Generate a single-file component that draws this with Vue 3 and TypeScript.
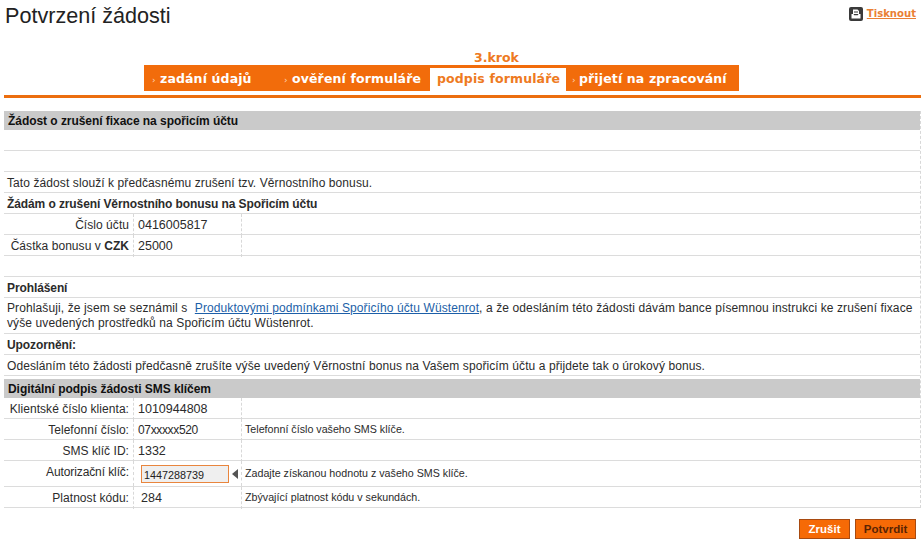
<template>
  <div class="page">
    <header class="page-head">
      <h1 class="page-title">Potvrzení žádosti</h1>
      <a class="print-link">
        <svg class="print-icon" width="14" height="14" viewBox="0 0 14 14">
          <rect width="14" height="14" rx="2" fill="#3a3a3a" />
          <path d="M4 2.500h4.500l1.500 1.500v3H4z" fill="#fff" />
          <path d="M2.500 7h2l.7 1.200h3.600L9.500 7h2v4.500h-9z" fill="#fff" />
          <path d="M5 5h4" stroke="#3a3a3a" stroke-width="1" />
        </svg>
        <span>Tisknout</span>
      </a>
    </header>

    <div class="step-label">3.krok</div>
    <nav class="steps">
      <div
        v-for="step in steps"
        :key="step.label"
        class="step"
        :class="[step.cls, { active: step.active }]"
      >
        <span v-if="!step.active" class="step-arrow">›</span>{{ step.label }}
      </div>
    </nav>
    <div class="rule"></div>

    <section class="form">
      <h2 class="section-head">Žádost o zrušení fixace na spořicím účtu</h2>
      <div class="row full"></div>
      <div class="row full"></div>
      <div class="row full">Tato žádost slouží k předčasnému zrušení tzv. Věrnostního bonusu.</div>
      <div class="row full bold">Žádám o zrušení Věrnostního bonusu na Spořicím účtu</div>
      <div class="row cols">
        <div class="cell label">Číslo účtu</div>
        <div class="cell value">0416005817</div>
        <div class="cell note"></div>
      </div>
      <div class="row cols">
        <div class="cell label">Částka bonusu v&nbsp;<b>CZK</b></div>
        <div class="cell value">25000</div>
        <div class="cell note"></div>
      </div>
      <div class="row full"></div>
      <div class="row full bold">Prohlášení</div>
      <div class="row full para">
        Prohlašuji, že jsem se seznámil s
        <a class="doc-link">Produktovými podmínkami Spořicího účtu Wüstenrot</a>, a že odesláním této žádosti dávám bance písemnou instrukci ke zrušení fixace<br />výše uvedených prostředků na Spořicím účtu Wüstenrot.
      </div>
      <div class="row full bold">Upozornění:</div>
      <div class="row full">Odesláním této žádosti předčasně zrušíte výše uvedený Věrnostní bonus na Vašem spořicím účtu a přijdete tak o úrokový bonus.</div>

      <h2 class="section-head second">Digitální podpis žádosti SMS klíčem</h2>
      <div class="row cols">
        <div class="cell label">Klientské číslo klienta:</div>
        <div class="cell value">1010944808</div>
        <div class="cell note"></div>
      </div>
      <div class="row cols">
        <div class="cell label">Telefonní číslo:</div>
        <div class="cell value masked">07xxxxx520</div>
        <div class="cell note">Telefonní číslo vašeho SMS klíče.</div>
      </div>
      <div class="row cols">
        <div class="cell label">SMS klíč ID:</div>
        <div class="cell value">1332</div>
        <div class="cell note"></div>
      </div>
      <div class="row cols tall">
        <div class="cell label key-label">Autorizační klíč:</div>
        <div class="cell value input-cell">
          <input class="key-input" value="1447288739" />
          <span class="input-arrow"></span>
        </div>
        <div class="cell note">Zadajte získanou hodnotu z vašeho SMS klíče.</div>
      </div>
      <div class="row cols">
        <div class="cell label">Platnost kódu:</div>
        <div class="cell value indented">284</div>
        <div class="cell note">Zbývající platnost kódu v sekundách.</div>
      </div>
    </section>

    <div class="actions">
      <button class="btn">Zrušit</button>
      <button class="btn dark">Potvrdit</button>
    </div>
  </div>
</template>

<script setup lang="ts">
interface Step {
  label: string;
  cls: string;
  active?: boolean;
}

const steps: Step[] = [
  { label: 'zadání údajů', cls: 'w1' },
  { label: 'ověření formuláře', cls: 'w2' },
  { label: 'podpis formuláře', cls: 'w3', active: true },
  { label: 'přijetí na zpracování', cls: 'w4' },
];
</script>

<style>
html,
body {
  margin: 0;
  background: #fff;
}
</style>

<style scoped>
.page {
  width: 922px;
  height: 544px;
  box-sizing: border-box;
  padding: 0 1px 0 4px;
  font-family: 'Liberation Sans', Arial, sans-serif;
  font-size: 12px;
  color: #2b2b2b;
  overflow: hidden;
}

.page-head {
  display: flex;
  justify-content: space-between;
  height: 50px;
}

.page-title {
  margin: 3px 0 0 1px;
  font-size: 21.600px;
  line-height: 25px;
  font-weight: 400;
  color: #222;
}

.print-link {
  display: flex;
  align-items: flex-start;
  gap: 4px;
  padding: 7px 5px 0 0;
  font-family: 'DejaVu Sans', sans-serif;
  font-size: 10.100px;
  font-weight: 700;
  line-height: 14px;
  color: #ea7f35;
  text-decoration: underline;
}

.print-icon {
  flex-shrink: 0;
}

.step-label {
  height: 15px;
  margin-left: 470px;
  font-family: 'DejaVu Sans', sans-serif;
  font-size: 12.500px;
  font-weight: 700;
  line-height: 15px;
  color: #ee7a22;
}

.steps {
  display: flex;
  height: 26px;
  margin-left: 140px;
  width: 595px;
  background: #f26c0b;
  font-family: 'DejaVu Sans', sans-serif;
  font-size: 12.500px;
  font-weight: 700;
  color: #fff;
  letter-spacing: 0.130px;
}

.step {
  box-sizing: border-box;
  padding-top: 6px;
  line-height: 16px;
  white-space: nowrap;
  padding-left: 8px;
}

.step-arrow {
  display: inline-block;
  width: 8px;
  font-size: 9px;
  font-weight: 400;
  color: #ffd9b8;
}

.w1 {
  width: 132px;
}

.w2 {
  width: 154px;
}

.w3 {
  width: 136px;
}

.w4 {
  width: 173px;
  padding-left: 6px;
}

.w4 .step-arrow {
  width: 7px;
}

.step.active {
  margin-top: 3px;
  height: 23px;
  padding: 3px 0 0 7px;
  background: #fff;
  color: #ee7a22;
}

.rule {
  height: 3px;
  margin-top: 4px;
  background: #ec6e0e;
}

.form {
  margin-top: 13px;
  border-right: 1px dashed #d8d8d8;
}

.section-head {
  margin: 0;
  height: 19px;
  padding-left: 4px;
  background: #cacaca;
  font-size: 12px;
  line-height: 20px;
  font-weight: 700;
  letter-spacing: -0.050px;
  color: #111;
}

.section-head.second {
  margin-top: 3px;
}

.row {
  box-sizing: border-box;
  height: 21px;
  border-bottom: 1px solid #dcdcdc;
  line-height: 22px;
  white-space: nowrap;
}

.row.full {
  padding-left: 3px;
  letter-spacing: 0.090px;
}

.row.bold {
  font-weight: 700;
  letter-spacing: -0.100px;
}

.row.para {
  height: 36px;
  padding-top: 3px;
  line-height: 15px;
  letter-spacing: 0.110px;
}

.doc-link {
  margin-left: 4px;
  color: #1d5fa8;
  letter-spacing: 0.100px;
  text-decoration: underline;
}

.cols {
  display: grid;
  grid-template-columns: 130px 108px 1fr;
}

.cols.tall {
  height: 26px;
}

.cell {
  box-sizing: border-box;
}

.label {
  padding-right: 4px;
  text-align: right;
  letter-spacing: 0.050px;
  border-right: 1px dashed #d8d8d8;
}

.label.key-label {
  letter-spacing: -0.100px;
}

.value {
  padding-left: 4px;
  font-size: 12.500px;
  border-right: 1px dashed #d8d8d8;
}

.value.masked {
  font-size: 12px;
  letter-spacing: -0.350px;
}

.value.indented {
  padding-left: 7px;
}

.note {
  padding-left: 3px;
  font-size: 10.700px;
  line-height: 20px;
}

.tall .note {
  padding-top: 2px;
}

.input-cell {
  display: flex;
  align-items: center;
  padding: 1px 0 0 7px;
}

.key-input {
  box-sizing: border-box;
  width: 88px;
  height: 18px;
  padding: 2px 0 0 2px;
  border: 1px solid #e9853d;
  background: #efefef;
  font-family: 'Liberation Sans', Arial, sans-serif;
  font-size: 10.800px;
  color: #222;
  outline: none;
}

.input-arrow {
  width: 0;
  height: 0;
  margin-left: 3px;
  border-top: 5px solid transparent;
  border-bottom: 5px solid transparent;
  border-right: 6px solid #555;
}

.actions {
  display: flex;
  justify-content: flex-end;
  gap: 5px;
  margin-top: 11px;
  padding-right: 5px;
}

.btn {
  box-sizing: border-box;
  height: 20px;
  width: 51px;
  padding: 0;
  border: 1px solid #a84a10;
  border-radius: 0;
  background: #f66a06;
  font-family: 'Liberation Sans', Arial, sans-serif;
  font-size: 11.500px;
  font-weight: 700;
  color: #fff;
}

.btn.dark {
  width: 61px;
  color: #5a2404;
}
</style>
